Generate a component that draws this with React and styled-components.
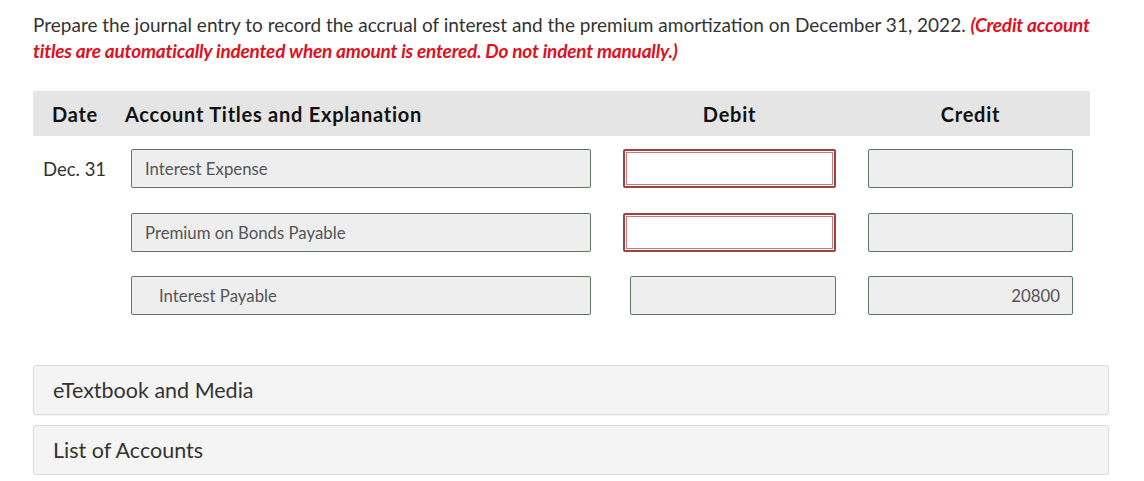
import React from "react";
import styled, { createGlobalStyle } from "styled-components";

const Global = createGlobalStyle`
  html, body { margin: 0; padding: 0; background: #fff; }
  body { font-family: Lato, "Open Sans", sans-serif; color: #333; }
`;

const Page = styled.div`
  padding: 12px 0 0 33px;
  width: 1077px;
`;

const Prompt = styled.p`
  margin: 0;
  font-size: 19px;
  line-height: 26px;
  color: #333;
`;

const Note = styled.strong`
  color: #e0101e;
  font-style: italic;
  font-weight: 700;
  letter-spacing: -0.2px;
`;

const Table = styled.div`
  margin-top: 27px;
  width: 1057px;
`;

const Header = styled.div`
  display: grid;
  grid-template-columns: 92px 466px 32px 213px 32px 205px 17px;
  align-items: center;
  height: 45px;
  background: #e5e5e5;
  font-size: 20px;
  font-weight: 700;
  letter-spacing: 0.75px;
  color: #111;
`;

const HeadCell = styled.div`
  padding-left: ${(p) => (p.$first ? "19px" : "0")};
  text-align: ${(p) => (p.$center ? "center" : "left")};
  grid-column: ${(p) => p.$col};
  white-space: nowrap;
`;

const Rows = styled.div`
  display: flex;
  flex-direction: column;
  gap: 24.5px;
  margin-top: 13px;
`;

const Row = styled.div`
  display: grid;
  grid-template-columns: 98px 460px 32px 213px 32px 205px;
  align-items: center;
`;

const DateCell = styled.div`
  grid-column: 1;
  padding-left: 10px;
  font-size: 18.5px;
  color: #333;
`;

const Field = styled.div`
  box-sizing: border-box;
  height: 39px;
  display: flex;
  align-items: center;
  justify-content: ${(p) => (p.$right ? "flex-end" : "flex-start")};
  padding: 0 ${(p) => (p.$right ? "12px" : "0")} 0 ${(p) => p.$indent || 13}px;
  background: #eeeeee;
  border: 1px solid #5d7a5f;
  border-radius: 2px;
  font-size: 16.8px;
  color: #555;
  grid-column: ${(p) => p.$col};
  margin-left: ${(p) => p.$shift || 0}px;
`;

const ErrorField = styled.div`
  box-sizing: border-box;
  height: 39px;
  grid-column: ${(p) => p.$col};
  background: #fff;
  border: 2px solid #a0403f;
  border-radius: 2px;
  box-shadow: inset 0 0 0 1px #fff, inset 0 0 0 2px #c97a7a;
`;

const Panels = styled.div`
  margin-top: 50px;
  display: flex;
  flex-direction: column;
  gap: 10px;
  width: 1076px;
`;

const Panel = styled.div`
  box-sizing: border-box;
  height: 50px;
  display: flex;
  align-items: center;
  padding-left: 19px;
  background: #f4f4f4;
  border: 1px solid #dcdcdc;
  border-radius: 3px;
  box-shadow: 0 1px 1px rgba(0, 0, 0, 0.05);
  font-size: 21.5px;
  color: #333;
`;

const rows = [
  { date: "Dec. 31", account: "Interest Expense", indent: 13, debitError: true, credit: "" },
  { date: "", account: "Premium on Bonds Payable", indent: 13, debitError: true, credit: "" },
  { date: "", account: "Interest Payable", indent: 27, debitError: false, credit: "20800" },
];

export default function App() {
  return (
    <>
      <Global />
      <Page>
        <Prompt>
          Prepare the journal entry to record the accrual of interest and the premium amortization on December 31, 2022.{" "}
          <Note>
            (Credit account
            <br />
            titles are automatically indented when amount is entered. Do not indent manually.)
          </Note>
        </Prompt>
        <Table>
          <Header>
            <HeadCell $first $col={1}>Date</HeadCell>
            <HeadCell $col={2}>Account Titles and Explanation</HeadCell>
            <HeadCell $center $col={4}>Debit</HeadCell>
            <HeadCell $center $col={6}>Credit</HeadCell>
          </Header>
          <Rows>
            {rows.map((r, i) => (
              <Row key={i}>
                <DateCell>{r.date}</DateCell>
                <Field $col={2} $indent={r.indent}>{r.account}</Field>
                {r.debitError ? (
                  <ErrorField $col={4} />
                ) : (
                  <Field $col={4} $shift={7} />
                )}
                <Field $col={6} $right>{r.credit}</Field>
              </Row>
            ))}
          </Rows>
        </Table>
        <Panels>
          <Panel>eTextbook and Media</Panel>
          <Panel>List of Accounts</Panel>
        </Panels>
      </Page>
    </>
  );
}
